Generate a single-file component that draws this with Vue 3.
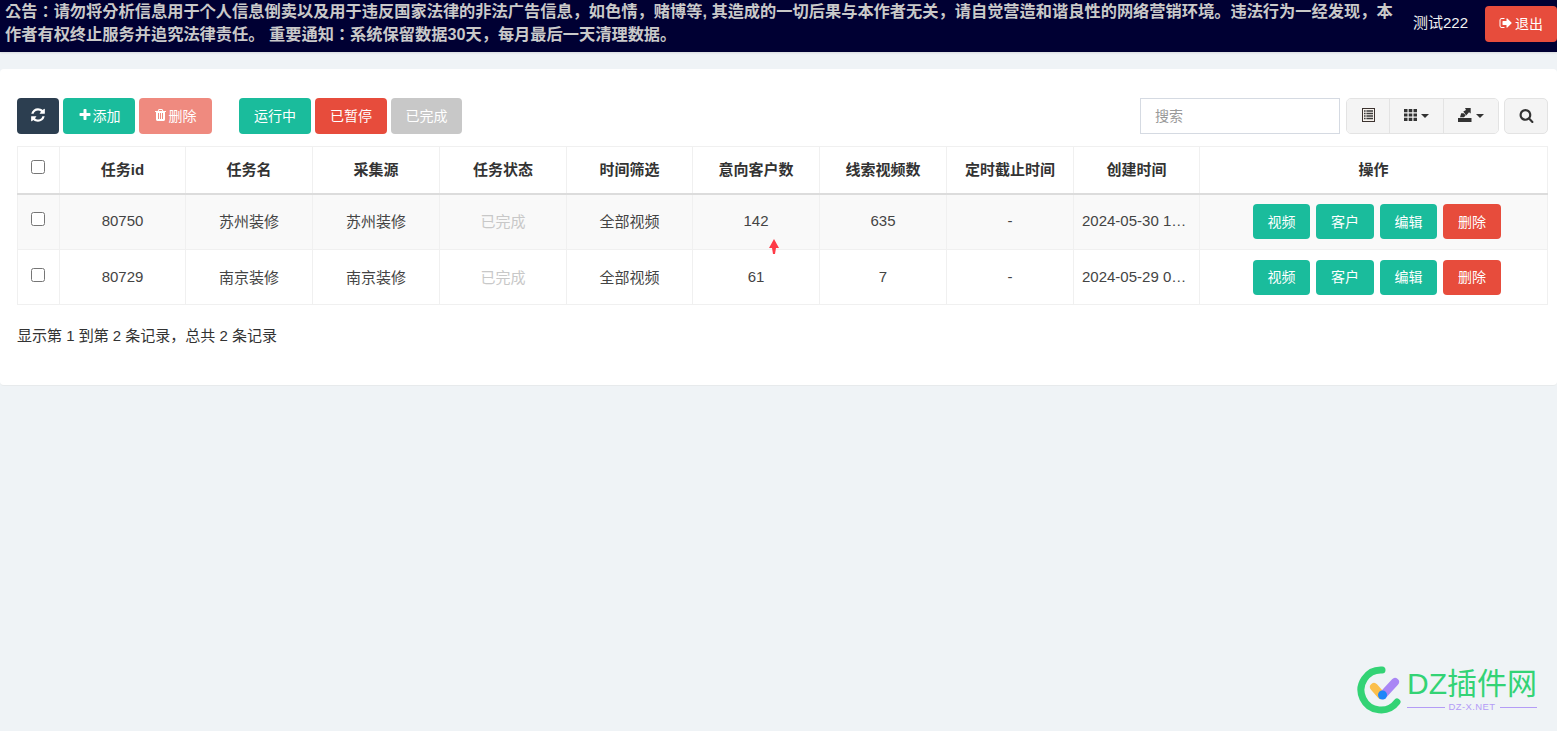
<script setup>
const columns = ['任务id', '任务名', '采集源', '任务状态', '时间筛选', '意向客户数', '线索视频数', '定时截止时间', '创建时间', '操作']
const colWidths = [42, 126, 127, 127, 127, 126, 127, 127, 127, 126, 348]

const rows = [
  { id: 80750, name: '苏州装修', source: '苏州装修', status: '已完成', filter: '全部视频', customers: 142, videos: 635, deadline: '-', created: '2024-05-30 14:26:08' },
  { id: 80729, name: '南京装修', source: '南京装修', status: '已完成', filter: '全部视频', customers: 61, videos: 7, deadline: '-', created: '2024-05-29 09:12:41' },
]
</script>

<template>
  <div class="page">
    <header class="topbar">
      <p class="notice">公告：请勿将分析信息用于个人信息倒卖以及用于违反国家法律的非法广告信息，如色情，赌博等, 其造成的一切后果与本作者无关，请自觉营造和谐良性的网络营销环境。违法行为一经发现，本作者有权终止服务并追究法律责任。 重要通知：系统保留数据30天，每月最后一天清理数据。</p>
      <span class="user">测试222</span>
      <button class="btn btn-red logout">
        <svg viewBox="0 0 1664 1792" width="13" height="14"><path d="M704 1440q0 4 1 20t.5 26.500-3 23.500-10 19.500-20.500 6.500h-320q-119 0-203.500-84.500t-84.500-203.500v-704q0-119 84.500-203.500t203.500-84.500h320q13 0 22.500 9.500t9.500 22.500q0 4 1 20t.5 26.500-3 23.500-10 19.500-20.500 6.500h-320q-66 0-113 47t-47 113v704q0 66 47 113t113 47h312l11.500 1 11.500 3 8 5.500 7 9 2 13.500zm928-544q0 26-19 45l-544 544q-19 19-45 19t-45-19-19-45v-288h-448q-26 0-45-19t-19-45v-384q0-26 19-45t45-19h448v-288q0-26 19-45t45-19 45 19l544 544q19 19 19 45z" fill="#fff"/></svg>
        退出
      </button>
    </header>

    <main class="card">
      <div class="toolbar">
        <div class="btn-row">
          <button class="btn btn-dark refresh">
            <svg viewBox="0 0 1792 1792" width="16" height="16"><path d="M1639 1056q0 5-1 7-64 268-268 434.500t-478 166.500q-146 0-282.500-55t-243.500-157l-129 129q-19 19-45 19t-45-19-19-45v-448q0-26 19-45t45-19h448q26 0 45 19t19 45-19 45l-137 137q71 66 161 102t187 36q134 0 250-65t186-179q11-17 53-117 8-23 30-23h192q13 0 22.500 9.500t9.500 22.500zm25-800v448q0 26-19 45t-45 19h-448q-26 0-45-19t-19-45 19-45l138-138q-148-137-349-137-134 0-250 65t-186 179q-11 17-53 117-8 23-30 23h-199q-13 0-22.500-9.500t-9.500-22.500v-7q65-268 270-434.500t480-166.500q146 0 284 55.500t245 156.500l130-129q19-19 45-19t45 19 19 45z" fill="#fff"/></svg>
          </button>
          <button class="btn btn-green add">
            <svg viewBox="0 0 1792 1792" width="14" height="14"><path d="M1600 736v192q0 40-28 68t-68 28h-416v416q0 40-28 68t-68 28h-192q-40 0-68-28t-28-68v-416h-416q-40 0-68-28t-28-68v-192q0-40 28-68t68-28h416v-416q0-40 28-68t68-28h192q40 0 68 28t28 68v416h416q40 0 68 28t28 68z" fill="#fff"/></svg>
            添加
          </button>
          <button class="btn btn-red faded">
            <svg viewBox="0 0 1408 1792" width="11" height="14"><path d="M512 1376v-704q0-14-9-23t-23-9h-64q-14 0-23 9t-9 23v704q0 14 9 23t23 9h64q14 0 23-9t9-23zm256 0v-704q0-14-9-23t-23-9h-64q-14 0-23 9t-9 23v704q0 14 9 23t23 9h64q14 0 23-9t9-23zm256 0v-704q0-14-9-23t-23-9h-64q-14 0-23 9t-9 23v704q0 14 9 23t23 9h64q14 0 23-9t9-23zm-544-992h448l-48-117q-7-9-17-11h-317q-10 2-17 11zm928 32v64q0 14-9 23t-23 9h-96v948q0 83-47 143.500t-113 60.500h-832q-66 0-113-58.500t-47-141.500v-952h-96q-14 0-23-9t-9-23v-64q0-14 9-23t23-9h309l70-167q15-37 54-63t79-26h320q40 0 79 26t54 63l70 167h309q14 0 23 9t9 23z" fill="#fff"/></svg>
            删除
          </button>
        </div>
        <div class="btn-row status-filters">
          <button class="btn btn-green">运行中</button>
          <button class="btn btn-red">已暂停</button>
          <button class="btn btn-gray">已完成</button>
        </div>
        <div class="tools">
          <input class="search" type="text" placeholder="搜索" />
          <div class="tool-group">
            <button class="tool t-list">
              <svg viewBox="0 0 13 14" width="13" height="14"><rect x=".5" y=".5" width="12" height="13" fill="#f7f3ee" stroke="#3c3330"/><path d="M2 3h9M2 5.500h9M2 8h9M2 10.500h9" stroke="#3c3c3c" stroke-width="1.300"/><path d="M4 2v10" stroke="#f7f3ee" stroke-width=".8"/></svg>
            </button>
            <button class="tool t-cols">
              <svg viewBox="0 0 13 12" width="13" height="12" fill="#333"><path d="M0 0h3.500v3.300H0zM4.700 0h3.600v3.300H4.700zM9.500 0H13v3.300H9.500zM0 4.400h3.500v3.200H0zM4.700 4.400h3.600v3.200H4.700zM9.500 4.400H13v3.200H9.500zM0 8.700h3.500V12H0zM4.700 8.700h3.600V12H4.700zM9.500 8.700H13V12H9.500z"/></svg>
              <span class="caret"></span>
            </button>
            <button class="tool t-export">
              <svg viewBox="0 0 14 14" width="14" height="14" fill="#333"><path d="M0 10h13.500v4H0zM2 9.300l1.200-4.100h2.400L7.700 7.300 6 9.300z"/><path d="M5.300 3.500 8 2 7 0h5.700v5.500L11 4.300 8.200 7.600z"/></svg>
              <span class="caret"></span>
            </button>
          </div>
          <button class="tool t-search">
            <svg viewBox="0 0 1792 1792" width="15" height="15"><path d="M1216 832q0-185-131.500-316.500t-316.500-131.500-316.500 131.500-131.500 316.500 131.500 316.500 316.500 131.500 316.500-131.500 131.500-316.500zm512 832q0 52-38 90t-90 38q-54 0-90-38l-343-342q-179 124-399 124-143 0-273.500-55.500t-225-150-150-225-55.500-273.500 55.500-273.500 150-225 225-150 273.500-55.500 273.500 55.500 225 150 150 225 55.500 273.500q0 220-124 399l343 343q37 37 37 90z" fill="#333"/></svg>
          </button>
        </div>
      </div>

      <table class="grid">
        <colgroup>
          <col v-for="(w, i) in colWidths" :key="i" :style="{ width: w + 'px' }" />
        </colgroup>
        <thead>
          <tr>
            <th class="check"><input type="checkbox" /></th>
            <th v-for="c in columns" :key="c">{{ c }}</th>
          </tr>
        </thead>
        <tbody>
          <tr v-for="r in rows" :key="r.id">
            <td class="check"><input type="checkbox" /></td>
            <td>{{ r.id }}</td>
            <td>{{ r.name }}</td>
            <td>{{ r.source }}</td>
            <td class="done">{{ r.status }}</td>
            <td>{{ r.filter }}</td>
            <td>{{ r.customers }}</td>
            <td>{{ r.videos }}</td>
            <td>{{ r.deadline }}</td>
            <td>{{ r.created }}</td>
            <td class="actions">
              <div class="action-row">
                <button class="btn btn-green act">视频</button>
                <button class="btn btn-green act">客户</button>
                <button class="btn btn-green act">编辑</button>
                <button class="btn btn-red act">删除</button>
              </div>
            </td>
          </tr>
        </tbody>
      </table>

      <p class="summary">显示第 1 到第 2 条记录，总共 2 条记录</p>
    </main>

    <svg class="cursor" viewBox="0 0 10 15" width="10" height="15"><path d="M5 0 10 9H7L6 15H4L3 9H0z" fill="#fe3b47"/></svg>

    <div class="watermark">
      <svg class="wm-logo" viewBox="0 0 50 50" width="50" height="50">
        <path d="M26 5A20 20 0 1 0 41 37" fill="none" stroke="#33d375" stroke-width="7" stroke-linecap="round"/>
        <path d="M18 22l7 8" stroke="#fbbf4b" stroke-width="8" stroke-linecap="round"/>
        <path d="M27 30l12-13" stroke="#a986f5" stroke-width="8" stroke-linecap="round"/>
        <circle cx="26.500" cy="30" r="4.500" fill="#1e86f8"/>
      </svg>
      <div class="wm-text">
        <div class="wm-title">DZ插件网</div>
        <div class="wm-sub"><i></i><span>DZ-X.NET</span><i></i></div>
      </div>
    </div>
  </div>
</template>

<style scoped>
.page {
  position: relative;
  height: 731px;
  overflow: hidden;
  font-family: "Liberation Sans", "Noto Sans CJK SC", sans-serif;
  font-size: 15px;
  color: #333;
}

.topbar {
  display: flex;
  align-items: flex-start;
  height: 52px;
  box-sizing: border-box;
  padding-left: 5px;
  background: #000033;
  box-shadow: 0 1px 2px rgba(0, 0, 0, 0.1);
}

.notice {
  width: 1393px;
  flex: none;
  margin: 0;
  color: #c9c9c9;
  font-family: "Liberation Sans", "Noto Sans CJK KR", sans-serif;
  font-size: 16.230px;
  font-weight: 700;
  line-height: 23px;
}

.user {
  margin: 13px 0 0 15px;
  width: 72px;
  flex: none;
  color: #f2f2f2;
  font-size: 15px;
  line-height: 20px;
}

.logout {
  flex: none;
  width: 72px;
  height: 35px;
  margin-top: 6px;
  padding-left: 1px;
  border-radius: 4px 0 0 4px;
  font-weight: 700;
}

.card {
  margin-top: 17px;
  height: 317px;
  box-sizing: border-box;
  padding: 29px 9px 0 17px;
  background: #fff;
  border-bottom: 1px solid #e7eaec;
  border-radius: 4px;
}

.toolbar {
  display: flex;
  align-items: center;
  height: 36px;
}

.btn-row {
  display: flex;
  gap: 4px;
}

.status-filters {
  margin-left: 27px;
}

.btn {
  display: inline-flex;
  align-items: center;
  justify-content: center;
  gap: 3px;
  height: 36px;
  width: 72px;
  padding: 0 0 3px;
  border: 0;
  border-radius: 4px;
  color: #fff;
  font: inherit;
  font-size: 14px;
}

.refresh {
  width: 42px;
}

.add {
  gap: 1px;
}

.btn-dark {
  background: #2c3e50;
}

.btn-green {
  background: #1abc9c;
}

.btn-red {
  background: #e74c3c;
}

.btn-gray {
  background: #c8c8c8;
  width: 71px;
}

.faded {
  opacity: 0.65;
  width: 73px;
}

.tools {
  display: flex;
  align-items: center;
  margin-left: auto;
  margin-right: 0;
}

.search {
  width: 200px;
  height: 36px;
  box-sizing: border-box;
  padding: 0 14px;
  border: 1px solid #d5dae2;
  outline: 0;
  font: inherit;
  font-size: 14px;
}

.search::placeholder {
  color: #999;
}

.tool-group {
  display: flex;
  margin-left: 6px;
  border: 1px solid #e3e3e3;
  border-radius: 5px;
  overflow: hidden;
}

.tool {
  display: inline-flex;
  align-items: center;
  justify-content: center;
  gap: 4px;
  height: 34px;
  padding: 0 0 2px;
  border: 0;
  background: #f4f4f4;
}

.t-list {
  width: 43px;
  border-right: 1px solid #e3e3e3;
}

.t-cols {
  width: 54px;
  border-right: 1px solid #e3e3e3;
}

.t-export {
  width: 54px;
}

.t-search {
  width: 44px;
  height: 36px;
  margin-left: 5px;
  border: 1px solid #e3e3e3;
  border-radius: 5px;
}

.caret {
  width: 0;
  height: 0;
  margin-top: 2px;
  border-top: 4px solid #333;
  border-left: 4px solid transparent;
  border-right: 4px solid transparent;
}

.grid {
  width: 1530px;
  margin-top: 12px;
  table-layout: fixed;
  border-collapse: collapse;
}

.grid th,
.grid td {
  padding: 8px;
  border: 1px solid #f0f0f0;
  text-align: center;
  white-space: nowrap;
  overflow: hidden;
  text-overflow: ellipsis;
}

.grid th {
  height: 47px;
  box-sizing: border-box;
  padding-bottom: 10px;
  border-bottom: 2px solid #dcdcdc;
  font-weight: 700;
}

.grid td {
  height: 55px;
  box-sizing: border-box;
  padding: 7px 8px 9px;
  color: #444;
}

.grid tbody tr:first-child td {
  height: 56px;
}

.grid tbody tr:first-child {
  background: #f9f9f9;
}

.grid .check {
  padding: 0;
}

.check input {
  display: block;
  width: 14px;
  height: 14px;
  margin: -5px 0 0 13px;
}

.grid .done {
  color: #c8c8c8;
}

.grid .actions {
  padding: 8px;
}

.action-row {
  display: flex;
  justify-content: center;
  gap: 6px;
  padding-left: 7px;
}

.act {
  width: 57px;
  height: 35px;
  padding-bottom: 2px;
}

.act:nth-child(even) {
  width: 58px;
}

.summary {
  margin: 21px 0 0;
  line-height: 20px;
  font-family: "Liberation Sans", "Noto Sans CJK KR", sans-serif;
}

.cursor {
  position: absolute;
  left: 769px;
  top: 239px;
}

.watermark {
  position: absolute;
  left: 1356px;
  top: 665px;
  display: flex;
  gap: 1px;
}

.wm-title {
  color: #33d375;
  font-size: 30px;
  line-height: 38px;
}

.wm-sub {
  display: flex;
  align-items: center;
  gap: 4px;
  margin-top: -2px;
  color: #b49cf6;
  font-size: 9.500px;
  letter-spacing: 0.4px;
  line-height: 12px;
}

.wm-sub i {
  flex: 1;
  height: 1px;
  background: #b49cf6;
}
</style>

<style>
body {
  background: #eff3f6;
}
</style>
